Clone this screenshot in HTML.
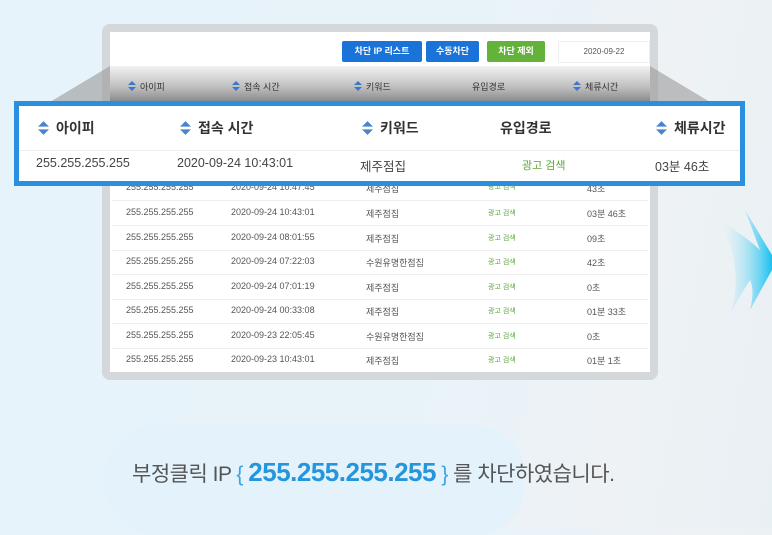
<!DOCTYPE html>
<html><head><meta charset="utf-8"><style>
*{margin:0;padding:0;box-sizing:border-box}
body{width:772px;height:527px;overflow:hidden;position:relative;font-family:"Liberation Sans","Noto Sans CJK KR",sans-serif;background:linear-gradient(100deg,#e6f3fa 0%,#e8f3f9 55%,#eef2f5 80%,#e9f0f4 100%)}
.abs{position:absolute}
.frame{left:102px;top:24px;width:556px;height:356px;background:#d4d8db;border-radius:8px}
.inner{left:110px;top:32px;width:540px;height:340px;background:#fff}
.btn{position:absolute;top:41px;height:21px;color:#fff;font-size:9px;font-weight:bold;text-align:center;line-height:21px;border-radius:2px}
.hdr{left:110px;top:66px;width:540px;height:36px;background:linear-gradient(#f2f2f2,#bdbdbd 60%,#888)}
.t{position:absolute;font-size:9px;color:#555;white-space:nowrap}
.g{color:#5aa83a !important}
.ar{display:inline-block;width:8px;height:10px;vertical-align:-1px;margin-right:4px}
.row{position:absolute;left:112px;width:536px;border-top:1px solid #eee}
.big{left:14px;top:101px;width:731px;height:85px;border:5px solid #2b8fe0;background:#fff}
.bt{position:absolute;font-size:13px;color:#444;white-space:nowrap}
</style></head><body>
<svg class="abs" style="left:700px;top:200px" width="72" height="130"><defs><linearGradient id="a" x1="0" x2="1"><stop offset="0" stop-color="#d8eef8" stop-opacity="0"/><stop offset="1" stop-color="#19c1f0"/></linearGradient></defs><path d="M20 20 Q50 40 60 50 L45 10 L72 55 L72 70 L50 110 Q55 90 50 80 Q40 95 30 115 Q45 70 20 20Z" fill="url(#a)"/></svg>
<div class="abs" style="left:105px;top:425px;width:420px;height:110px;background:#e4f3fb;border-radius:50px"></div>
<div class="abs frame"></div>
<div class="abs inner"></div>
<div class="btn" style="left:342px;width:80px;background:#1a73d9">차단 IP 리스트</div>
<div class="btn" style="left:426px;width:53px;background:#1a73d9">수동차단</div>
<div class="btn" style="left:487px;width:58px;background:#63b23a">차단 제외</div>
<div class="t" style="left:558px;top:41px;width:92px;height:22px;border:1px solid #eee;text-align:center;line-height:20px;font-size:8px">2020-09-22</div>
<svg class="abs" style="left:50px;top:66px" width="660" height="40"><path d="M60 0 L0 36 L660 36 L600 0Z" fill="#9a9a9a" opacity="0.6"/></svg>
<div class="abs hdr"></div>
<div class="t" style="left:128px;top:80px;color:#333"><svg class="ar" viewBox="0 0 8 10"><path d="M4 0L8 4H0Z M0 6H8L4 10Z" fill="#3a78c8"/></svg>아이피</div>
<div class="t" style="left:232px;top:80px;color:#333"><svg class="ar" viewBox="0 0 8 10"><path d="M4 0L8 4H0Z M0 6H8L4 10Z" fill="#3a78c8"/></svg>접속 시간</div>
<div class="t" style="left:354px;top:80px;color:#333"><svg class="ar" viewBox="0 0 8 10"><path d="M4 0L8 4H0Z M0 6H8L4 10Z" fill="#3a78c8"/></svg>키워드</div>
<div class="t" style="left:472px;top:80px;color:#333">유입경로</div>
<div class="t" style="left:573px;top:80px;color:#333"><svg class="ar" viewBox="0 0 8 10"><path d="M4 0L8 4H0Z M0 6H8L4 10Z" fill="#3a78c8"/></svg>체류시간</div>

<div class="row" style="top:200px"></div><div class="row" style="top:225px"></div><div class="row" style="top:250px"></div><div class="row" style="top:274px"></div><div class="row" style="top:299px"></div><div class="row" style="top:323px"></div><div class="row" style="top:348px"></div>
<div class="t" style="left:126px;top:182px">255.255.255.255</div><div class="t" style="left:231px;top:182px">2020-09-24 10:47:45</div><div class="t" style="left:366px;top:182px">제주점집</div><div class="t g" style="left:488px;top:182px;font-size:7px">광고 검색</div><div class="t" style="left:587px;top:182px">43초</div>
<div class="t" style="left:126px;top:207px">255.255.255.255</div><div class="t" style="left:231px;top:207px">2020-09-24 10:43:01</div><div class="t" style="left:366px;top:207px">제주점집</div><div class="t g" style="left:488px;top:208px;font-size:7px">광고 검색</div><div class="t" style="left:587px;top:207px">03분 46초</div>
<div class="t" style="left:126px;top:232px">255.255.255.255</div><div class="t" style="left:231px;top:232px">2020-09-24 08:01:55</div><div class="t" style="left:366px;top:232px">제주점집</div><div class="t g" style="left:488px;top:233px;font-size:7px">광고 검색</div><div class="t" style="left:587px;top:232px">09초</div>
<div class="t" style="left:126px;top:256px">255.255.255.255</div><div class="t" style="left:231px;top:256px">2020-09-24 07:22:03</div><div class="t" style="left:366px;top:256px">수원유명한점집</div><div class="t g" style="left:488px;top:257px;font-size:7px">광고 검색</div><div class="t" style="left:587px;top:256px">42초</div>
<div class="t" style="left:126px;top:281px">255.255.255.255</div><div class="t" style="left:231px;top:281px">2020-09-24 07:01:19</div><div class="t" style="left:366px;top:281px">제주점집</div><div class="t g" style="left:488px;top:282px;font-size:7px">광고 검색</div><div class="t" style="left:587px;top:281px">0초</div>
<div class="t" style="left:126px;top:305px">255.255.255.255</div><div class="t" style="left:231px;top:305px">2020-09-24 00:33:08</div><div class="t" style="left:366px;top:305px">제주점집</div><div class="t g" style="left:488px;top:306px;font-size:7px">광고 검색</div><div class="t" style="left:587px;top:305px">01분 33초</div>
<div class="t" style="left:126px;top:330px">255.255.255.255</div><div class="t" style="left:231px;top:330px">2020-09-23 22:05:45</div><div class="t" style="left:366px;top:330px">수원유명한점집</div><div class="t g" style="left:488px;top:331px;font-size:7px">광고 검색</div><div class="t" style="left:587px;top:330px">0초</div>
<div class="t" style="left:126px;top:354px">255.255.255.255</div><div class="t" style="left:231px;top:354px">2020-09-23 10:43:01</div><div class="t" style="left:366px;top:354px">제주점집</div><div class="t g" style="left:488px;top:355px;font-size:7px">광고 검색</div><div class="t" style="left:587px;top:354px">01분 1초</div>

<div class="abs big"></div>
<div class="abs" style="left:19px;top:150px;width:721px;border-top:1px solid #eee"></div>
<div class="bt" style="left:38px;top:118px;font-weight:bold;color:#333;font-size:14px"><svg class="ar" style="width:11px;height:14px;margin-right:7px;vertical-align:-2px" viewBox="0 0 8 10"><path d="M4 0L8 4H0Z M0 6H8L4 10Z" fill="#4a84d0"/></svg>아이피</div>
<div class="bt" style="left:180px;top:118px;font-weight:bold;color:#333;font-size:14px"><svg class="ar" style="width:11px;height:14px;margin-right:7px;vertical-align:-2px" viewBox="0 0 8 10"><path d="M4 0L8 4H0Z M0 6H8L4 10Z" fill="#4a84d0"/></svg>접속 시간</div>
<div class="bt" style="left:362px;top:118px;font-weight:bold;color:#333;font-size:14px"><svg class="ar" style="width:11px;height:14px;margin-right:7px;vertical-align:-2px" viewBox="0 0 8 10"><path d="M4 0L8 4H0Z M0 6H8L4 10Z" fill="#4a84d0"/></svg>키워드</div>
<div class="bt" style="left:500px;top:118px;font-weight:bold;color:#333;font-size:14px">유입경로</div>
<div class="bt" style="left:656px;top:118px;font-weight:bold;color:#333;font-size:14px"><svg class="ar" style="width:11px;height:14px;margin-right:7px;vertical-align:-2px" viewBox="0 0 8 10"><path d="M4 0L8 4H0Z M0 6H8L4 10Z" fill="#4a84d0"/></svg>체류시간</div>
<div class="bt" style="left:36px;top:156px;font-size:12.5px">255.255.255.255</div>
<div class="bt" style="left:177px;top:156px;font-size:12.5px">2020-09-24 10:43:01</div>
<div class="bt" style="left:360px;top:156px;font-size:12.5px">제주점집</div>
<div class="bt g" style="left:522px;top:157px;font-size:11px">광고 검색</div>
<div class="bt" style="left:655px;top:156px;font-size:12.5px">03분 46초</div>

<div class="abs" style="left:132px;top:457px;font-size:21px;color:#555;white-space:nowrap;letter-spacing:-0.5px">부정클릭 IP <span style="color:#3ba3e0">{</span> <span style="color:#2596dc;font-weight:bold;font-size:26px">255.255.255.255</span> <span style="color:#3ba3e0">}</span> 를 차단하였습니다.</div>
</body></html>
